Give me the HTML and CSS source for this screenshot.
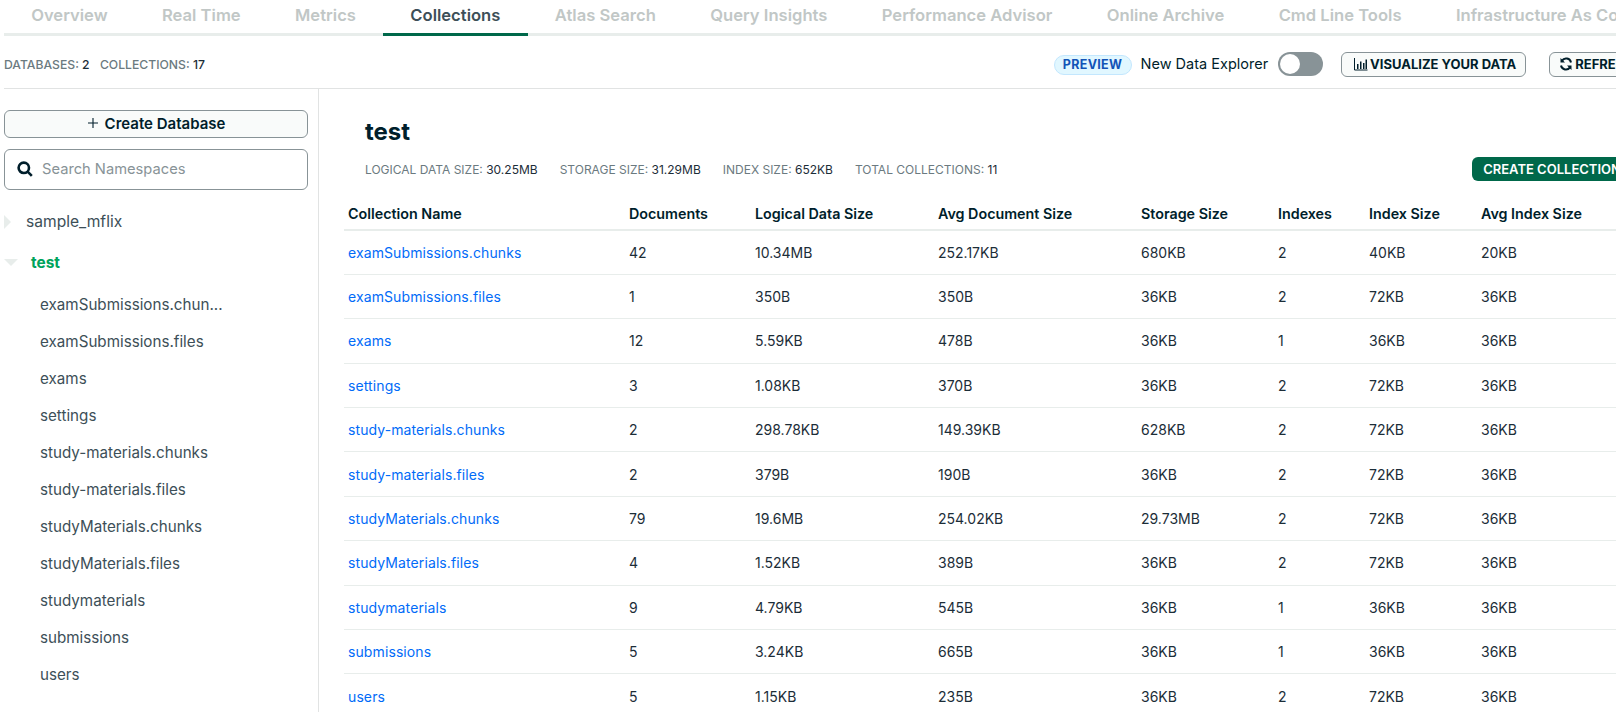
FILE: index.html
```html
<!DOCTYPE html>
<html>
    <head>
        <title>Collections</title>
        <link rel="stylesheet" href="styles.css">
    </head>
    <body>
        <div class="page">
            <div class="tabs">
                <a class="tab">Overview</a>
                <a class="tab">Real Time</a>
                <a class="tab">Metrics</a>
                <a class="tab active">Collections</a>
                <a class="tab">Atlas Search</a>
                <a class="tab">Query Insights</a>
                <a class="tab">Performance Advisor</a>
                <a class="tab">Online Archive</a>
                <a class="tab">Cmd Line Tools</a>
                <a class="tab">Infrastructure As Code</a>
            </div>

            <div class="toolbar">
                <div class="counts">
                    <span class="stat-label">DATABASES:</span> <span class="stat-value">2</span>
                    <span class="stat-label counts-second">COLLECTIONS:</span> <span class="stat-value">17</span>
                </div>
                <div class="actions">
                    <span class="badge">PREVIEW</span>
                    <span class="explorer-label">New Data Explorer</span>
                    <span class="toggle"><span class="knob"></span></span>
                    <button class="btn btn-visualize">
                        <svg class="btn-icon" viewBox="0 0 14 14" width="14" height="14"><path d="M0.5 1v12h13" fill="none" stroke="#001e2b" stroke-width="1"/><path d="M3 7h1.5v5H3zM6 4.5h1.5V12H6zM9 6h1.5v6H9zM11.5 2.5H13V12h-1.5z" fill="#001e2b"/></svg>
                        VISUALIZE YOUR DATA
                    </button>
                    <button class="btn">
                        <svg class="btn-icon" viewBox="0 0 14 14" width="14" height="14"><path d="M12 5.5A5 5 0 0 0 3 3.6M2 8.5A5 5 0 0 0 11 10.4" fill="none" stroke="#001e2b" stroke-width="2"/><path d="M1.5 1v4.5H6zM12.5 13V8.5H8z" fill="#001e2b"/></svg>
                        REFRESH
                    </button>
                </div>
            </div>

            <div class="content">
                <div class="sidebar">
                    <button class="create-db">
                        <svg class="plus" viewBox="0 0 12 12" width="12" height="12"><path d="M6 1v10M1 6h10" stroke="#001e2b" stroke-width="1.1"/></svg>
                        Create Database
                    </button>
                    <div class="search">
                        <svg viewBox="0 0 16 16" width="16" height="16"><circle cx="6.8" cy="6.8" r="5.2" fill="none" stroke="#001e2b" stroke-width="2.6"/><path d="M10.4 10.4l4.4 4.4" stroke="#001e2b" stroke-width="2.6"/></svg>
                        <span class="search-text">Search Namespaces</span>
                    </div>
                    <div class="db">
                        <span class="caret caret-right"></span>
                        <span class="db-name">sample_mflix</span>
                    </div>
                    <div class="db db-open">
                        <span class="caret caret-down"></span>
                        <span class="db-name">test</span>
                    </div>
                    <ul class="namespaces">
                        <li>examSubmissions.chun...</li>
                        <li>examSubmissions.files</li>
                        <li>exams</li>
                        <li>settings</li>
                        <li>study-materials.chunks</li>
                        <li>study-materials.files</li>
                        <li>studyMaterials.chunks</li>
                        <li>studyMaterials.files</li>
                        <li>studymaterials</li>
                        <li>submissions</li>
                        <li>users</li>
                    </ul>
                </div>

                <div class="main">
                    <div class="main-head">
                        <h1>test</h1>
                        <div class="db-stats">
                            <div class="db-stats-list">
                                <span><span class="stat-label">LOGICAL DATA SIZE:</span> <span class="stat-value">30.25MB</span></span>
                                <span><span class="stat-label">STORAGE SIZE:</span> <span class="stat-value">31.29MB</span></span>
                                <span><span class="stat-label">INDEX SIZE:</span> <span class="stat-value">652KB</span></span>
                                <span><span class="stat-label">TOTAL COLLECTIONS:</span> <span class="stat-value">11</span></span>
                            </div>
                            <button class="btn-create">CREATE COLLECTION</button>
                        </div>
                    </div>

                    <table class="collections">
                        <colgroup>
                            <col class="c1"><col class="c2"><col class="c3"><col class="c4">
                            <col class="c5"><col class="c6"><col class="c7"><col class="c8">
                        </colgroup>
                        <thead>
                            <tr>
                                <th>Collection Name</th>
                                <th>Documents</th>
                                <th>Logical Data Size</th>
                                <th>Avg Document Size</th>
                                <th>Storage Size</th>
                                <th>Indexes</th>
                                <th>Index Size</th>
                                <th>Avg Index Size</th>
                            </tr>
                        </thead>
                        <tbody>
                            <tr><td><a>examSubmissions.chunks</a></td><td>42</td><td>10.34MB</td><td>252.17KB</td><td>680KB</td><td>2</td><td>40KB</td><td>20KB</td></tr>
                            <tr><td><a>examSubmissions.files</a></td><td>1</td><td>350B</td><td>350B</td><td>36KB</td><td>2</td><td>72KB</td><td>36KB</td></tr>
                            <tr><td><a>exams</a></td><td>12</td><td>5.59KB</td><td>478B</td><td>36KB</td><td>1</td><td>36KB</td><td>36KB</td></tr>
                            <tr><td><a>settings</a></td><td>3</td><td>1.08KB</td><td>370B</td><td>36KB</td><td>2</td><td>72KB</td><td>36KB</td></tr>
                            <tr><td><a>study-materials.chunks</a></td><td>2</td><td>298.78KB</td><td>149.39KB</td><td>628KB</td><td>2</td><td>72KB</td><td>36KB</td></tr>
                            <tr><td><a>study-materials.files</a></td><td>2</td><td>379B</td><td>190B</td><td>36KB</td><td>2</td><td>72KB</td><td>36KB</td></tr>
                            <tr><td><a>studyMaterials.chunks</a></td><td>79</td><td>19.6MB</td><td>254.02KB</td><td>29.73MB</td><td>2</td><td>72KB</td><td>36KB</td></tr>
                            <tr><td><a>studyMaterials.files</a></td><td>4</td><td>1.52KB</td><td>389B</td><td>36KB</td><td>2</td><td>72KB</td><td>36KB</td></tr>
                            <tr><td><a>studymaterials</a></td><td>9</td><td>4.79KB</td><td>545B</td><td>36KB</td><td>1</td><td>36KB</td><td>36KB</td></tr>
                            <tr><td><a>submissions</a></td><td>5</td><td>3.24KB</td><td>665B</td><td>36KB</td><td>1</td><td>36KB</td><td>36KB</td></tr>
                            <tr><td><a>users</a></td><td>5</td><td>1.15KB</td><td>235B</td><td>36KB</td><td>2</td><td>72KB</td><td>36KB</td></tr>
                        </tbody>
                    </table>
                </div>
            </div>
        </div>
    </body>
</html>
```

FILE: styles.css
```css
html, body {
    margin: 0;
    height: 712px;
    overflow: hidden;
    background-color: white;
}

body {
    font-family: "Inter", "Lato", sans-serif;
    font-size: 14px;
    color: #001e2b;
}

button {
    font-family: inherit;
    cursor: pointer;
}

.page {
    width: 1680px;
    margin-left: 4px;
}

.tabs {
    display: flex;
    height: 33px;
    border-bottom: 3px solid #e8edeb;
}

.tab {
    padding: 5px 27.2px 0;
    height: 28px;
    font-size: 16.6px;
    font-weight: 600;
    color: #c1c7c6;
    white-space: nowrap;
}

.tab.active {
    color: #3d4f58;
    border-bottom: 3px solid #00684a;
}

.toolbar {
    display: flex;
    align-items: center;
    height: 52px;
    border-bottom: 1px solid #e1e3e3;
}

.counts {
    padding-top: 5px;
    font-size: 12.2px;
    font-weight: 500;
}

.counts-second {
    margin-left: 7px;
}

.stat-label {
    color: #6b7a80;
}

.stat-value {
    color: #1c2d38;
}

.actions {
    display: flex;
    align-items: center;
    margin-left: auto;
    padding: 4px 40px 0 0;
}

.badge {
    box-sizing: border-box;
    width: 78px;
    height: 20px;
    margin-top: 1px;
    line-height: 18px;
    text-align: center;
    font-size: 12.5px;
    font-weight: 700;
    letter-spacing: 0.3px;
    color: #1254b7;
    background-color: #e1f7ff;
    border: 1px solid #c3e7fe;
    border-radius: 10px;
}

.explorer-label {
    margin: 0 1px 2px 9px;
    font-size: 14.5px;
}

.toggle {
    box-sizing: border-box;
    display: block;
    width: 45px;
    height: 24px;
    margin-left: 9px;
    padding: 2px;
    background-color: #889397;
    border-radius: 12px;
}

.knob {
    display: block;
    width: 20px;
    height: 20px;
    background-color: white;
    border-radius: 50%;
}

.btn {
    display: flex;
    align-items: center;
    gap: 2px;
    box-sizing: border-box;
    height: 25px;
    padding: 0 9px;
    margin-left: 23px;
    font-size: 13px;
    font-weight: 700;
    color: #001e2b;
    background-color: #f9fbfa;
    border: 1px solid #889397;
    border-radius: 6px;
    white-space: nowrap;
}

.btn-visualize {
    margin-left: 18px;
    padding: 0 9px 0 12px;
}

.content {
    display: flex;
    height: 624px;
}

.sidebar {
    box-sizing: border-box;
    flex: none;
    width: 315px;
    padding-top: 21px;
    border-right: 1px solid #e1e3e3;
}

.create-db {
    display: flex;
    align-items: center;
    justify-content: center;
    box-sizing: border-box;
    width: 304px;
    height: 28px;
    padding: 0 0 2px;
    font-size: 15px;
    font-weight: 600;
    color: #001e2b;
    background-color: #f9fbfa;
    border: 1px solid #889397;
    border-radius: 6px;
}

.plus {
    margin-right: 6px;
}

.search {
    display: flex;
    align-items: center;
    box-sizing: border-box;
    width: 304px;
    height: 41px;
    margin-top: 11px;
    padding: 0 0 1px 12px;
    border: 1px solid #889397;
    border-radius: 6px;
}

.search-text {
    margin-left: 9px;
    font-size: 14.7px;
    color: #889397;
}

.db {
    display: flex;
    align-items: center;
    height: 41px;
    margin-top: 11px;
    font-size: 15.6px;
    color: #3d4f58;
}

.db-name {
    margin-left: -1px;
}

.db-open {
    height: 40px;
    margin-top: 0;
    font-size: 15.4px;
    font-weight: 700;
    color: #00a35c;
}

.db-open .db-name {
    margin-left: 13px;
}

.caret {
    flex: none;
    width: 0;
    height: 0;
}

.caret-right {
    margin-right: 16px;
    border-left: 7px solid #e8edeb;
    border-top: 7px solid transparent;
    border-bottom: 7px solid transparent;
}

.caret-down {
    border-top: 7px solid #e8edeb;
    border-left: 7px solid transparent;
    border-right: 7px solid transparent;
}

.namespaces {
    list-style: none;
    margin: 3.5px 0 0;
    padding: 0 0 0 36px;
}

.namespaces li {
    height: 37.1px;
    line-height: 37.1px;
    font-size: 15.2px;
    color: #3d4f58;
    white-space: nowrap;
}

.main {
    flex: 1;
    min-width: 0;
    padding: 0 52px 0 25px;
}

.main-head {
    padding-left: 21px;
}

h1 {
    margin: 0;
    padding-top: 28px;
    height: 36px;
    line-height: 30px;
    font-size: 24px;
    font-weight: 700;
}

.db-stats {
    display: flex;
    align-items: center;
    height: 28px;
    padding-top: 2px;
    font-size: 12px;
}

.db-stats-list {
    display: flex;
    gap: 22px;
}

.btn-create {
    box-sizing: border-box;
    height: 24px;
    width: 160px;
    margin-left: auto;
    padding: 0;
    font-size: 13px;
    font-weight: 600;
    color: white;
    background-color: #00684a;
    border: none;
    border-radius: 6px;
}

.collections {
    table-layout: fixed;
    width: 1315px;
    margin-top: 12px;
    border-collapse: collapse;
}

.c1 { width: 281px; }
.c2 { width: 126px; }
.c3 { width: 183px; }
.c4 { width: 203px; }
.c5 { width: 137px; }
.c6 { width: 91px; }
.c7 { width: 112px; }
.c8 { width: 182px; }

.collections th {
    box-sizing: border-box;
    height: 35px;
    padding: 2px 0 0 4px;
    text-align: left;
    font-size: 14.3px;
    font-weight: 600;
    border-bottom: 2px solid #e8edeb;
    white-space: nowrap;
}

.collections td {
    box-sizing: border-box;
    height: 44.4px;
    padding: 0 0 0 4px;
    color: #1c2d38;
    border-bottom: 1px solid #e8edeb;
    white-space: nowrap;
}

.collections a {
    letter-spacing: 0.1px;
    color: #016bf8;
}
```
